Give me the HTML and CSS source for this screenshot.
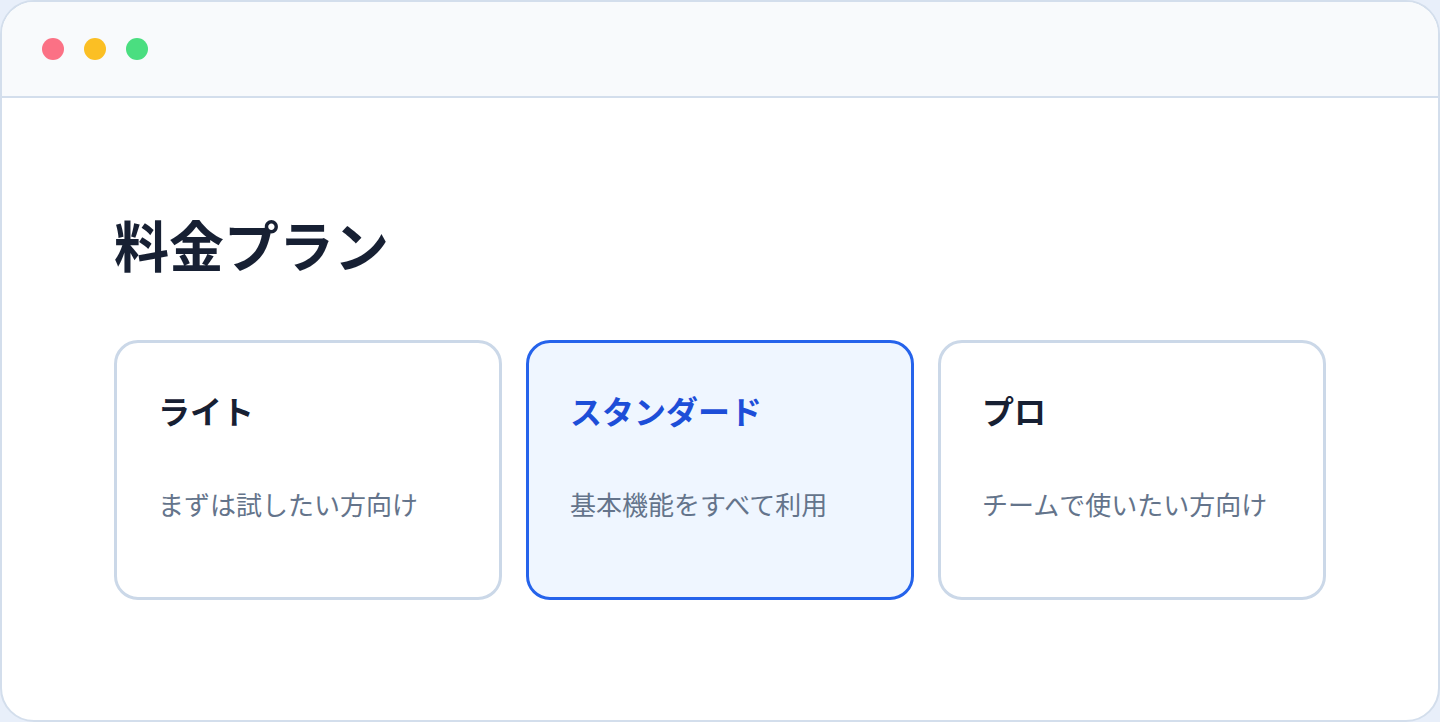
FILE: index.html
```html
<!DOCTYPE html>
<html lang="ja">
<head>
	<meta charset="UTF-8">
	<title>料金プラン</title>
	<link rel="stylesheet" href="styles.css">
</head>
<body>
	<div class="window">
		<div class="titlebar">
			<span class="dot red"></span>
			<span class="dot yellow"></span>
			<span class="dot green"></span>
		</div>

		<div class="content">
			<h1>料金プラン</h1>

			<!-- プラン一覧 -->
			<ul class="plans">
				<li class="plan">
					<h2>ライト</h2>
					<p>まずは試したい方向け</p>
				</li>
				<li class="plan current">
					<h2>スタンダード</h2>
					<p>基本機能をすべて利用</p>
				</li>
				<li class="plan">
					<h2>プロ</h2>
					<p>チームで使いたい方向け</p>
				</li>
			</ul>
		</div>
	</div>
</body>
</html>
```

FILE: styles.css
```css
*{
	margin: 0;
	padding: 0;
	box-sizing: border-box;
	list-style-type: none;
}
body{
	background-color: #e8effa;
	font-family: "Noto Sans CJK JP", "Noto Sans", sans-serif;
}
.window{
	width: 1440px;
	height: 722px;
	background-color: #fff;
	border: 2px solid #d3deec;
	border-radius: 34px;
	overflow: hidden;
}
.titlebar{
	display: flex;
	align-items: center;
	gap: 20px;
	height: 96px;
	padding-left: 40px;
	background-color: #f8fafc;
	border-bottom: 2px solid #d3deec;
}
.dot{
	width: 22px;
	height: 22px;
	border-radius: 50%;
}
.red{
	background-color: #fb7185;
}
.yellow{
	background-color: #fbbf24;
}
.green{
	background-color: #4ade80;
}
.content{
	padding: 112px 112px 0;
}
h1{
	font-size: 55px;
	line-height: 67px;
	font-weight: 700;
	color: #172033;
}
.plans{
	display: grid;
	grid-template-columns: repeat(3, 1fr);
	gap: 24px;
	width: 1212px;
	margin-top: 63px;
}
.plan{
	height: 260px;
	padding: 48px 41px 0;
	border: 3px solid #cbd8e8;
	border-radius: 24px;
	background-color: #fff;
}
.plan h2{
	font-size: 32px;
	line-height: 38px;
	font-weight: 700;
	color: #172033;
}
.plan p{
	margin-top: 57px;
	font-size: 26px;
	line-height: 36px;
	color: #64748b;
}
.plan.current{
	border-color: #2563eb;
	background-color: #eff6ff;
}
.plan.current h2{
	color: #1d4ed8;
}
```
